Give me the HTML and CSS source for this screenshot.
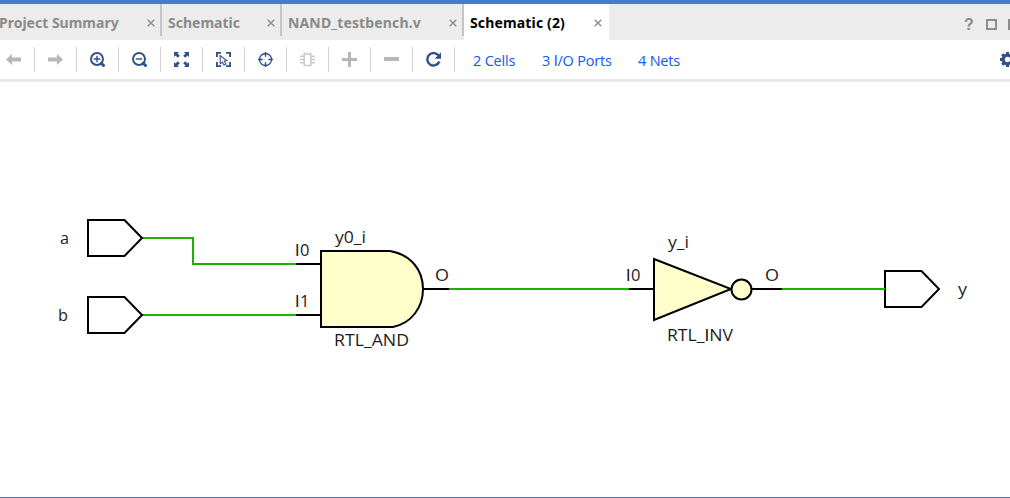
FILE: index.html
```html
<!DOCTYPE html>
<html lang="en">
<head>
<meta charset="utf-8">
<title>Schematic (2)</title>
<link rel="stylesheet" href="styles.css">
</head>
<body>
<div class="window">
  <div class="tabs">
    <div class="tab first"><span class="name">Project Summary</span><svg class="close" viewBox="0 0 8 8"><path d="M.7.7l6.600 6.600M7.300.7L.7 7.300"/></svg></div>
    <div class="tab second"><span class="name">Schematic</span><svg class="close" viewBox="0 0 8 8"><path d="M.7.7l6.600 6.600M7.300.7L.7 7.300"/></svg></div>
    <div class="tab third"><span class="name">NAND_testbench.v</span><svg class="close" viewBox="0 0 8 8"><path d="M.7.7l6.600 6.600M7.300.7L.7 7.300"/></svg></div>
    <div class="tab active"><span class="name">Schematic (2)</span><svg class="close" viewBox="0 0 8 8"><path d="M.7.7l6.600 6.600M7.300.7L.7 7.300"/></svg></div>
    <div class="controls"><span class="help">?</span><i class="box"></i><i class="box"></i></div>
  </div>
  <div class="toolbar">
    <div class="tool back"><svg class="icon muted" viewBox=".5 .5 15 15"><path class="fill" d="M.5 8L6.500 2.500v3.500h9v4h-9v3.500z"/></svg></div>
    <div class="tool"><svg class="icon muted" viewBox=".5 .5 15 15"><path class="fill" d="M15.500 8L9.500 2.500v3.500h-9v4h9v3.500z"/></svg></div>
    <div class="tool"><svg class="icon" viewBox=".5 .5 15 15"><g class="line"><circle cx="7.500" cy="7.500" r="6" stroke-width="1.900"/><path d="M4.200 7.500h6.600M7.500 4.200v6.600" stroke-width="1.400"/><path d="M11.800 11.800l2.200 2.200" stroke-width="3" stroke-linecap="round"/></g></svg></div>
    <div class="tool"><svg class="icon" viewBox=".5 .5 15 15"><g class="line"><circle cx="7.500" cy="7.500" r="6" stroke-width="1.900"/><path d="M4.200 7.500h6.600" stroke-width="1.400"/><path d="M11.800 11.800l2.200 2.200" stroke-width="3" stroke-linecap="round"/></g></svg></div>
    <div class="tool"><svg class="icon" viewBox=".5 .5 15 15"><path class="fill" d="M.5.5h5L4 2l2.300 2.300-2 2L2 4 .5 5.500zM15.500.5v5L14 4l-2.300 2.300-2-2L12 2 10.500.5zM.5 15.500v-5L2 12l2.300-2.300 2 2L4 14l1.500 1.500zM15.500 15.500h-5L12 14l-2.300-2.300 2-2L14 12l1.500-1.500z"/></svg></div>
    <div class="tool"><svg class="icon" viewBox=".5 .5 15 15"><g class="line"><path stroke-width="1.900" d="M1.400 5.500V1.400h4.100M10.500 1.400h4.100v4.100M14.600 10.500v4.100h-4.100M5.500 14.600H1.400v-4.100"/><path stroke-width="1.100" d="M4.600 4l.2 8.200 2.100-1.700 1.600 3 1.900-1-1.600-2.800 2.500-.7z"/></g></svg></div>
    <div class="tool"><svg class="icon" viewBox=".5 .5 15 15"><g class="line"><circle cx="8" cy="8" r="6" stroke-width="1.300"/><path stroke-width="1.400" d="M8 .5v4.700M8 10.800v4.700M.5 8h4.700M10.800 8h4.700"/></g></svg></div>
    <div class="tool"><svg class="icon pale" viewBox=".5 .5 15 15"><g class="line"><path stroke-width="1.500" d="M4.700 2H6.500q0 1 1.500 1t1.500-1h1.800v12H4.700z"/><path stroke-width="1.500" d="M.5 4.800h4M.5 8h4M.5 11.200h4M11.500 4.800h4M11.500 8h4M11.500 11.200h4"/></g></svg></div>
    <div class="tool"><svg class="icon muted" viewBox=".5 .5 15 15"><path class="fill" d="M6.500.5h3v6h6v3h-6v6h-3v-6h-6v-3h6z"/></svg></div>
    <div class="tool"><svg class="icon muted" viewBox=".5 .5 15 15"><path class="fill" d="M.5 5.500h15v4H.5z"/></svg></div>
    <div class="tool"><svg class="icon" viewBox=".5 .5 15 15"><path class="line" stroke-width="2.400" d="M13.300 4.600A6.200 6.200 0 1 0 13.800 10"/><path class="fill" d="M15.500.8v6.400H9.200z"/></svg></div>
    <div class="links"><a class="cells">2 Cells</a><a class="ports">3 <span class="plain">I</span>/O Ports</a><a class="nets">4 Nets</a></div>
    <svg class="gear" viewBox=".5 .5 15 15"><circle class="line" cx="8" cy="8" r="4.300" stroke-width="3.200"/><path class="line" stroke-width="3" d="M8 .5v3M8 12.500v3M.5 8h3M12.500 8h3M2.700 2.700l2 2M11.300 11.300l2 2M13.300 2.700l-2 2M4.700 11.300l-2 2"/></svg>
  </div>
  <svg class="canvas" viewBox="0 82 1010 415">
    <g class="net">
      <path d="M142 238h51v26h103M142 315h154M449 289h180M782 289h103"/>
    </g>
    <g class="pin">
      <path d="M296 264h25M296 315h25M424 289h25M629 289h25M752 289h30"/>
    </g>
    <g class="port">
      <path d="M88 220h36.500l17.500 18-17.500 18H88zM88 297h36.500l17.500 18-17.500 18H88zM885 271h36.500l17.500 18-17.500 18H885z"/>
    </g>
    <path class="net" d="M880 289h5"/>
    <g class="gate">
      <path d="M321 251h69C412 255 423 271 423 289S412 323 393 327H321z"/>
      <path d="M654 259l77 30-77 31z"/>
      <circle cx="741.500" cy="289.500" r="10"/>
    </g>
    <g class="label">
      <text x="60" y="244" textLength="9" lengthAdjust="spacingAndGlyphs">a</text>
      <text x="58" y="321" textLength="10" lengthAdjust="spacingAndGlyphs">b</text>
      <text class="plain" x="295" y="256">I</text>
      <text x="300" y="256">0</text>
      <text class="plain" x="295" y="307">I</text>
      <text x="300" y="307">1</text>
      <text x="335" y="243" textLength="31" lengthAdjust="spacingAndGlyphs">y0_i</text>
      <text x="334" y="346" textLength="75" lengthAdjust="spacingAndGlyphs">RTL_AND</text>
      <text x="435" y="281" textLength="14" lengthAdjust="spacingAndGlyphs">O</text>
      <text class="plain" x="626" y="281">I</text>
      <text x="631" y="281">0</text>
      <text x="668" y="248" textLength="21" lengthAdjust="spacingAndGlyphs">y_i</text>
      <text x="667" y="341" textLength="66" lengthAdjust="spacingAndGlyphs">RTL_<tspan class="plain">I</tspan>NV</text>
      <text x="765" y="281" textLength="14" lengthAdjust="spacingAndGlyphs">O</text>
      <text x="958" y="295" textLength="9" lengthAdjust="spacingAndGlyphs">y</text>
    </g>
  </svg>
</div>
</body>
</html>
```
FILE: styles.css
```css
* { box-sizing: border-box; }
body { margin: 0; background: #fff; font-family: "Noto Sans", "Open Sans", sans-serif; }
.window { width: 1010px; height: 498px; display: flex; flex-direction: column; overflow: hidden; border-top: 4px solid #4a7ad0; border-bottom: 1px solid #4a7ad0; }
.tabs { flex: 0 0 36px; display: flex; background: #ececec; color: #8a8a8a; font-weight: 700; }
.tab { display: flex; align-items: center; justify-content: space-between; padding: 2px 5px 0 6px; white-space: nowrap; border-right: 2px solid #c3c3c3; border-image: linear-gradient(#c3c3c3 31px, transparent 31px) 1; }
.first { width: 162px; padding-left: 0; }
.second { width: 120px; }
.third { width: 182px; }
.active { width: 145px; padding-right: 7px; background: #fff; color: #000; border: 0; }
.name { font-size: 14px; line-height: 34px; }
.first .name { margin-left: -1px; }
.third .name { letter-spacing: 0.15px; }
.active .name { letter-spacing: 0.15px; }
.close { width: 8px; height: 8px; fill: none; stroke: #8c8c8c; stroke-width: 1.400; }
.controls { display: flex; align-items: center; margin-left: auto; width: 46px; flex: none; padding-top: 5px; overflow: hidden; }
.help { width: 22px; flex: none; font: 700 16px "Liberation Sans", sans-serif; }
.box { flex: none; width: 11px; height: 11px; margin-right: 11px; border: 2px solid #8c8c8c; }
.toolbar { flex: 0 0 42px; display: flex; align-items: center; border-bottom: 3px solid #e8e8e8; overflow: hidden; }
.tool { flex: 0 0 42px; height: 25px; display: flex; align-items: center; justify-content: center; border-right: 1px solid #d3d3d3; }
.back { flex-basis: 35px; padding-right: 7px; }
.icon { width: 15px; height: 15px; color: #2f5088; flex: none; }
.muted { color: #b7b7b7; }
.pale { color: #c9c9c9; }
.fill { fill: currentColor; }
.line { fill: none; stroke: currentColor; }
.links { display: flex; padding-left: 18px; color: #1358f0; font: 14.5px/22px "Open Sans", sans-serif; letter-spacing: -0.2px; margin-top: 4px; white-space: nowrap; }
.cells { width: 69px; }
.ports { width: 96px; }
.plain { font-family: Roboto, sans-serif; }
.gear { width: 15px; height: 15px; flex: none; color: #2f5088; margin: 0 -5px 0 auto; }
.canvas { display: block; width: 1010px; height: 415px; flex: none; }
.net { fill: none; stroke: #1db100; stroke-width: 2; }
.pin { fill: none; stroke: #000; stroke-width: 2; }
.port { fill: #fff; stroke: #000; stroke-width: 2; }
.gate { fill: #ffffcc; stroke: #000; stroke-width: 2; }
.label { font: 16.5px "Open Sans", sans-serif; fill: #1c1c1c; }
```
